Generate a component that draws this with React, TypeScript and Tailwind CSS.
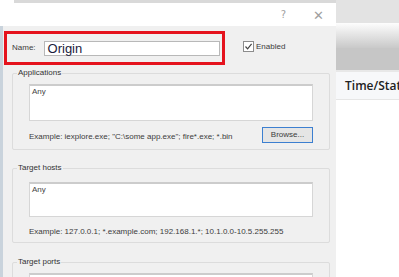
import React from 'react';

const small = "font-['Liberation_Sans',Arial,sans-serif] text-[8px] leading-[10px] text-[#3c3c3c]";

function GroupBox({ title, height, className, children }: { title: string; height: number; className?: string; children?: React.ReactNode }) {
  return (
    <div
      className={`relative shrink-0 ml-[9px] w-[318px] border border-[#dcdcdc] rounded-[2px] px-[16px] ${className ?? ''}`}
      style={{ height }}
    >
      <span className={`${small} absolute -top-[6px] left-[4px] bg-[#f0f0f0] px-[1px] text-[#333]`}>{title}</span>
      {children}
    </div>
  );
}

function Area({ height, text }: { height: number; text?: string }) {
  return (
    <div
      className="bg-white border border-[#d6d6d6] border-t-[2px] border-t-[#cccccc] px-[2px] pt-[1px]"
      style={{ height }}
    >
      {text && <span className={`${small} block text-[#444]`}>{text}</span>}
    </div>
  );
}

export default function App() {
  return (
    <div className="w-[399px] h-[277px] overflow-hidden flex bg-white">
      {/* dialog */}
      <div className="w-[336px] h-full flex flex-col shrink-0 overflow-hidden">
        <div className="h-[4px] shrink-0 pl-[14px] bg-white">
          <div className="h-[3px] bg-[#d9d9d9]" />
        </div>
        <div className="h-[22px] shrink-0 bg-white flex items-center justify-end pr-[12px] gap-[27px] text-[#a0a0a0] font-['DejaVu_Sans',sans-serif] leading-none">
          <span className="text-[10px]">?</span>
          <span className="text-[13px] font-light">✕</span>
        </div>
        <div className="flex-1 min-h-0 flex flex-col bg-[#f0f0f0] border-l-[3px] border-[#c9d3dc] pt-[5px] leading-none">
          <div className="flex items-start shrink-0">
            <div className="ml-[1px] w-[221px] h-[34px] border-[3px] border-[#e5131d] flex items-center pl-[5px]">
              <span className={small}>Name:</span>
              <div className="ml-[8px] w-[176px] h-[15px] bg-white border border-[#b8b8b8] flex items-center pl-[3px]">
                <span className="font-['Liberation_Sans',Arial,sans-serif] text-[13px] leading-none text-[#1b1b3c]">Origin</span>
              </div>
            </div>
            <div className="ml-[18px] mt-[10px] flex items-center gap-[2px]">
              <div className="w-[11px] h-[11px] border border-[#8c8c8c] bg-white flex items-center justify-center">
                <svg width="9" height="9" viewBox="0 0 9 9">
                  <path d="M1.5 4.5 L3.6 6.8 L7.6 1.8" fill="none" stroke="#444" strokeWidth="1.2" />
                </svg>
              </div>
              <span className={small}>Enabled</span>
            </div>
          </div>

          <GroupBox title="Applications" height={77} className="mt-[8px] pt-[10px]">
            <Area height={37} text="Any" />
            <div className="mt-[6px] flex items-start justify-between">
              <span className={`${small} block mt-[5px]`}>Example: iexplore.exe; "C:\some app.exe"; fire*.exe; *.bin</span>
              <div className="w-[51px] h-[16px] border border-[#3c7fd0] bg-[#e5e5e5] flex items-center justify-center">
                <span className={small}>Browse...</span>
              </div>
            </div>
          </GroupBox>

          <GroupBox title="Target hosts" height={75} className="mt-[18px] pt-[13px]">
            <Area height={35} text="Any" />
            <span className={`${small} block mt-[10px]`}>Example: 127.0.0.1; *.example.com; 192.168.1.*; 10.1.0.0-10.5.255.255</span>
          </GroupBox>

          <GroupBox title="Target ports" height={40} className="mt-[19px] pt-[10px]">
            <Area height={30} />
          </GroupBox>
        </div>
      </div>

      {/* window behind */}
      <div className="flex-1 flex flex-col">
        <div className="h-[23px] bg-[#e3e3e3]" />
        <div className="h-[25px] bg-gradient-to-b from-[#fdfdfd] to-[#c9c9c9]" />
        <div className="h-[22px] bg-[#c6c6c6]" />
        <div className="h-[2px] bg-[#e8e8e8]" />
        <div className="h-[28px] bg-[#f7f8fa] border-b border-[#e6e6e6] flex items-center pl-[9px]">
          <span className="font-['Open_Sans',sans-serif] text-[12px] font-semibold text-[#222] whitespace-nowrap">Time/Status</span>
        </div>
        <div className="flex-1 bg-white" />
      </div>
    </div>
  );
}
